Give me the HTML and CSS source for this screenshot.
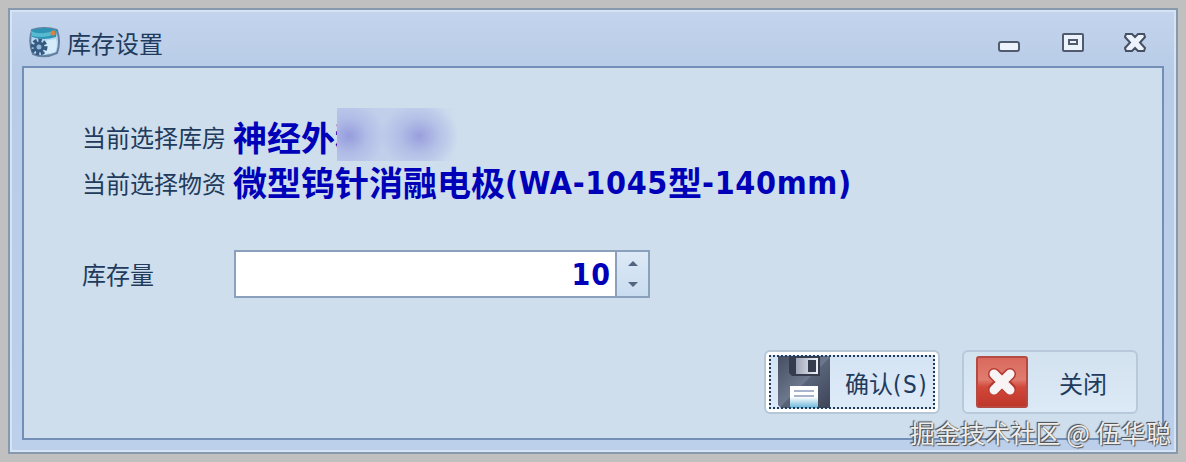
FILE: index.html
```html
<!DOCTYPE html>
<html lang="zh-CN">
<head>
    <meta charset="UTF-8">
    <title>库存设置</title>
    <link rel="stylesheet" href="styles.css">
</head>
<body>
    <div class="window">
        <div class="titlebar">
            <svg class="app-icon" width="32" height="32" viewBox="0 0 32 32">
                <path d="M4 3Q16-1 29 3Q33 15 29 26Q16 32 5 27Q0 15 4 3Z" fill="#b4d7f2" stroke="#64809f" stroke-width="2"/>
                <path d="M4 3Q16-1 29 3L28 10Q15 14 4 10Z" fill="#2e94b4"/>
                <path d="M3 4Q12 9 28 3L22 9Q12 11 4 9Z" fill="#56bad0"/>
                <path d="M16 14L28 12Q30 19 27 25L17 27Z" fill="#d5ebfa"/>
                <circle cx="25" cy="6" r="2.5" fill="#d98343"/>
                <circle cx="11" cy="20" r="6" fill="none" stroke="#375a80" stroke-width="5" stroke-dasharray="3 1.5"/>
                <circle cx="11" cy="20" r="4" fill="#8fb8d8" stroke="#375a80" stroke-width="3"/>
            </svg>
            <span class="title">库存设置</span>
            <div class="controls">
                <svg width="22" height="20" viewBox="0 0 22 20"><rect x="1" y="9" width="20" height="9" rx="2" fill="#edf3fc" stroke="#515b6e" stroke-width="2"/></svg>
                <svg width="22" height="20" viewBox="0 0 22 20"><rect x="1" y="1" width="20" height="17" rx="1" fill="#edf3fc" stroke="#515b6e" stroke-width="2"/><rect x="7" y="7" width="8" height="4" fill="none" stroke="#515b6e" stroke-width="2"/></svg>
                <svg width="22" height="20" viewBox="0 0 22 20"><path d="M2 1H8L11 4L14 1H20L21 4L16 9.5L21 15L20 18H14L11 15L8 18H2L1 15L6 9.5L1 4Z" fill="#edf3fc" stroke="#465064" stroke-width="2"/></svg>
            </div>
        </div>
        <div class="panel">
            <div class="row">
                <span class="label">当前选择库房</span>
                <span class="value">神经外<span class="covered">科</span></span>
                <span class="mosaic"></span>
            </div>
            <div class="row">
                <span class="label">当前选择物资</span>
                <span class="value">微型钨针消融电极<span class="code">(WA-1045</span>型<span class="code">-140mm)</span></span>
            </div>
            <div class="row stock">
                <span class="label">库存量</span>
                <div class="spin">
                    <span class="number">10</span>
                    <div class="arrows">
                        <svg width="10" height="5" viewBox="0 0 10 5"><path d="M0 5L5 0L10 5Z" fill="#50657e"/></svg>
                        <svg width="10" height="5" viewBox="0 0 10 5"><path d="M0 0L5 5L10 0Z" fill="#50657e"/></svg>
                    </div>
                </div>
            </div>
            <div class="buttons">
                <button class="btn save">
                    <svg width="52" height="52" viewBox="0 0 52 52">
                        <defs>
                            <linearGradient id="disk" x2="1" y2="1"><stop offset="0" stop-color="#454e60"/><stop offset=".5" stop-color="#6d788e"/><stop offset=".52" stop-color="#5a6479"/><stop offset="1" stop-color="#3c4457"/></linearGradient>
                            <linearGradient id="shutter"><stop offset="0" stop-color="#9da5b6"/><stop offset="1" stop-color="#f0f2f8"/></linearGradient>
                            <linearGradient id="paper" x2="0" y2="1"><stop offset=".5" stop-color="#fff"/><stop offset="1" stop-color="#65b5d9"/></linearGradient>
                        </defs>
                        <path d="M0 0H52V52H3L0 49Z" fill="url(#disk)"/>
                        <path d="M11 0H42V20H14L11 17Z" fill="#343c4e"/>
                        <path d="M18 2H40V18H18Z" fill="url(#shutter)"/>
                        <rect x="30" y="4" width="8" height="12" fill="#343c4e"/>
                        <rect x="12" y="30" width="28" height="22" fill="url(#paper)"/>
                        <path d="M16 35H36M16 40H36" stroke="#a8b4cb" stroke-width="2"/>
                    </svg>
                    <span>确认<span class="key">(S)</span></span>
                </button>
                <button class="btn close">
                    <svg width="52" height="52" viewBox="0 0 52 52">
                        <defs><linearGradient id="red" x2="0" y2="1"><stop offset="0" stop-color="#d9685c"/><stop offset=".45" stop-color="#e07c6f"/><stop offset=".6" stop-color="#d2493b"/><stop offset="1" stop-color="#bd3529"/></linearGradient></defs>
                        <rect x="1" y="1" width="50" height="50" rx="2" fill="url(#red)" stroke="#b54a42" stroke-width="2"/>
                        <path d="M18 18L34 33M34 18L18 33" stroke="#b43a31" stroke-width="12" stroke-linecap="round"/>
                        <path d="M18 18L34 34M34 18L18 34" stroke="#f8f3f4" stroke-width="9" stroke-linecap="round"/>
                    </svg>
                    <span>关闭</span>
                </button>
            </div>
        </div>
    </div>
    <div class="watermark">掘金技术社区 @ 伍华聪</div>
</body>
</html>
```
FILE: styles.css
```css
* {
    box-sizing: border-box;
}
body {
    margin: 0;
    padding: 8px;
    height: 462px;
    overflow: hidden;
    background: #c0c0c0;
    font-family: "Liberation Sans", "Noto Sans CJK SC", sans-serif;
    font-size: 24px;
    color: #213b5c;
}
.window {
    width: 1170px;
    height: 446px;
    padding: 0 12px 12px;
    border: 2px solid #8799ad;
    box-shadow: inset 0 0 0 2px #d5e3f4;
    background: linear-gradient(#c4d4ed, #b8cce7 60px, #bdd0eb);
    display: flex;
    flex-direction: column;
}
.titlebar {
    height: 56px;
    display: flex;
    align-items: center;
    padding: 7px 18px 0 6px;
}
.app-icon {
    margin-top: 2px;
}
.title {
    margin: 6px 0 0 7px;
    line-height: 30px;
}
.controls {
    margin-left: auto;
    display: flex;
    gap: 42px;
    padding-top: 2px;
}
.controls svg:nth-child(2) {
    margin-right: -2px;
}
.panel {
    flex: 1;
    border: 2px solid #748fb7;
    background: #cedeed;
    padding: 46px 24px 24px 58px;
    display: flex;
    flex-direction: column;
}
.row {
    display: flex;
    align-items: center;
    height: 46px;
    white-space: nowrap;
}
.label {
    width: 151px;
    padding-top: 4px;
    line-height: 46px;
}
.value {
    color: #0000b8;
    font-size: 34px;
    line-height: 46px;
    font-weight: bold;
    font-family: "Noto Sans CJK SC", sans-serif;
    display: flex;
}
.code {
    font-family: "DejaVu Sans Condensed", "DejaVu Sans", sans-serif;
    font-stretch: condensed;
    font-size: 32px;
    line-height: 48px;
    letter-spacing: 0.65px;
}
/* lies over the masked part of the name */
.mosaic {
    position: relative;
    width: 120px;
    height: 53px;
    margin: -5px 0 0 -32px;
    background: radial-gradient(ellipse 36px 34px at 12px 28px, #959cdd, rgba(165, 175, 226, 0.55) 50%, transparent),
        radial-gradient(ellipse 40px 34px at 82px 28px, #999fdd, rgba(165, 175, 226, 0.55) 50%, transparent),
        linear-gradient(90deg, #bdcaea, #c6d4ec 75%, #cedeed);
}
.stock {
    height: 48px;
    margin-top: 44px;
}
.stock .label {
    width: 152px;
}
.spin {
    width: 416px;
    height: 48px;
    display: flex;
    border: 2px solid #8ba0ba;
    background: #fff;
}
.number {
    flex: 1;
    text-align: right;
    padding-right: 4px;
    color: #0000b8;
    font: bold 30px/46px "DejaVu Sans Condensed", "DejaVu Sans", sans-serif;
    letter-spacing: 1px;
}
.arrows {
    width: 33px;
    border-left: 2px solid #8ba0ba;
    background: linear-gradient(#dde9f6, #c9dcef);
    display: flex;
    flex-direction: column;
    align-items: center;
    justify-content: center;
    gap: 16px;
}
.buttons {
    display: flex;
    justify-content: flex-end;
    gap: 22px;
    margin-top: 52px;
}
.btn {
    width: 176px;
    height: 64px;
    display: flex;
    align-items: center;
    border: 2px solid #b7c9da;
    border-radius: 6px;
    background: linear-gradient(#d3e2ef, #dce9f6);
    color: #213b5c;
    font: inherit;
    line-height: 30px;
    white-space: nowrap;
}
.btn > span {
    margin-top: 6px;
}
.save {
    padding: 0 0 0 12px;
    border-color: #b6c7d8;
    background: linear-gradient(#d4e3f3, #deebf9);
    box-shadow: inset 0 0 0 3px #fff;
    outline: 2px dotted #213b5c;
    outline-offset: -7px;
    gap: 15px;
}
.close {
    padding: 0 0 0 12px;
    gap: 31px;
}
.key {
    font-family: "DejaVu Sans Condensed", "DejaVu Sans", sans-serif;
    font-stretch: condensed;
    letter-spacing: 1.5px;
}
.watermark {
    position: absolute;
    left: 910px;
    top: 414px;
    font: 25px/36px "Noto Sans CJK SC", sans-serif;
    letter-spacing: 0.1px;
    color: #eee;
    white-space: nowrap;
    text-shadow: -1px -1px 1px #444, 1px 1px 1px #555;
}
```
